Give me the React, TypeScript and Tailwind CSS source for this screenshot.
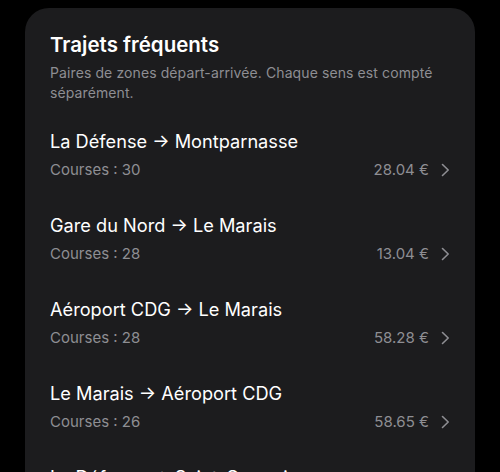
import React from "react";

const rows = [
  { from: "La Défense", to: "Montparnasse", count: 30, price: "28.04" },
  { from: "Gare du Nord", to: "Le Marais", count: 28, price: "13.04" },
  { from: "Aéroport CDG", to: "Le Marais", count: 28, price: "58.28" },
  { from: "Le Marais", to: "Aéroport CDG", count: 26, price: "58.65" },
  { from: "La Défense", to: "Saint-Germain", count: 24, price: "31.12" },
];

function Chevron() {
  return (
    <svg width="9" height="14" viewBox="0 0 9 14" fill="none" className="shrink-0">
      <path d="M1.5 1.5 L7.2 7 L1.5 12.5" stroke="#8e8e93" strokeWidth="1.6" strokeLinecap="round" strokeLinejoin="round" />
    </svg>
  );
}

export default function App() {
  return (
    <div className="w-[500px] h-[472px] bg-black overflow-hidden pt-2 px-[25px]" style={{ fontFamily: "Inter, 'Noto Sans', sans-serif" }}>
      <div className="bg-[#1c1c1e] rounded-[24px] px-[25px] pt-[23px] min-h-[600px]">
        <div className="flex flex-col gap-[4px]">
          <h1 className="text-[20.5px] leading-[28px] font-semibold text-white">Trajets fréquents</h1>
          <p className="text-[14px] leading-[20px] tracking-[0.1px] text-[#8e8e93]">
            Paires de zones départ-arrivée. Chaque sens est compté séparément.
          </p>
        </div>
        <div className="mt-[8px] flex flex-col">
          {rows.map((r, i) => (
            <div key={i} className="h-[84px] pt-[16px] flex flex-col gap-[5px]">
              <div className="text-[18.2px] leading-[28px] text-white">
                {r.from} → {r.to}
              </div>
              <div className="flex items-center justify-between text-[15px] leading-[20px] text-[#8e8e93]">
                <span>Courses : {r.count}</span>
                <span className="flex items-center gap-[12px]">
                  <span>{r.price} €</span>
                  <Chevron />
                </span>
              </div>
            </div>
          ))}
        </div>
      </div>
    </div>
  );
}
